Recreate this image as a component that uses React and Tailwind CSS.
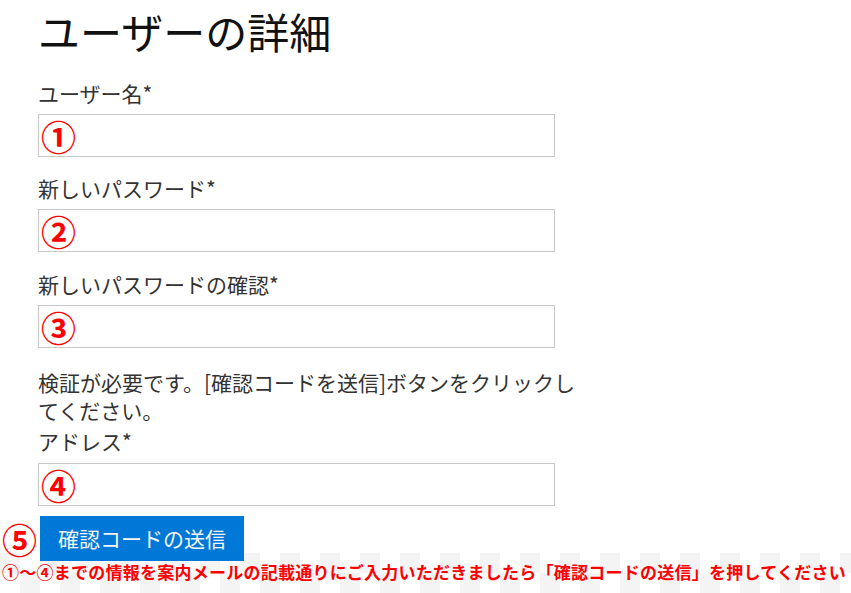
import React from 'react';

const fields = [
  { label: 'ユーザー名*', mark: '①', type: 'text' },
  { label: '新しいパスワード*', mark: '②', type: 'password' },
  { label: '新しいパスワードの確認*', mark: '③', type: 'password' },
];

function Field({ label, mark, type, top }) {
  return (
    <div className={top}>
      <label className="block text-[21px] leading-[28px] text-[#333]">{label}</label>
      <div className="mt-[7px] flex h-[43px] w-[517px] items-center border border-[#c8c8c8] bg-white pl-[2px]">
        <span className="text-[35px] font-bold leading-none text-[#ff0000]">{mark}</span>
        <input type={type} className="h-full flex-1 bg-transparent outline-none" />
      </div>
    </div>
  );
}

export default function App() {
  return (
    <div
      className="h-[593px] w-full overflow-hidden bg-white bg-[conic-gradient(white_25%,#f4f4f4_0_50%,white_0_75%,#f4f4f4_0)] bg-[length:40px_40px] bg-[position:0_553px] bg-repeat-x"
      style={{ fontFamily: '"Noto Sans CJK JP", "Noto Sans", sans-serif' }}
    >
      <div className="pl-[38px]">
        <h1 className="text-[42px] leading-[62px] font-normal text-[#111]">ユーザーの詳細</h1>

        <Field {...fields[0]} top="mt-[17px]" />
        <Field {...fields[1]} top="mt-[17px]" />
        <Field {...fields[2]} top="mt-[18px]" />

        <p className="mt-[20px] w-[548px] text-[21px] leading-[28px] text-[#333]">
          検証が必要です。[確認コードを送信]ボタンをクリックしてください。
        </p>
        <div>
          <label className="mt-[3px] block text-[21px] leading-[28px] text-[#333]">アドレス*</label>
          <div className="mt-[8px] flex h-[43px] w-[517px] items-center border border-[#c8c8c8] bg-white pl-[2px]">
            <span className="text-[35px] font-bold leading-none text-[#ff0000]">④</span>
            <input type="email" className="h-full flex-1 bg-transparent outline-none" />
          </div>
        </div>
      </div>

      <div className="mt-[10px] flex h-[45px] items-start pl-[2px]">
        <span className="mt-[5px] w-[38px] text-[35px] font-bold leading-[35px] text-[#ff0000]">⑤</span>
        <button className="h-[45px] bg-[#0078d7] px-[18px] text-[21px] text-[#f4f4f4]">確認コードの送信</button>
      </div>

      <p className="pl-[2px] text-[17px] font-bold leading-[22px] tracking-[0.25px] whitespace-nowrap text-[#ff0000]">
        ①～④までの情報を案内メールの記載通りにご入力いただきましたら「確認コードの送信」を押してください
      </p>
    </div>
  );
}
